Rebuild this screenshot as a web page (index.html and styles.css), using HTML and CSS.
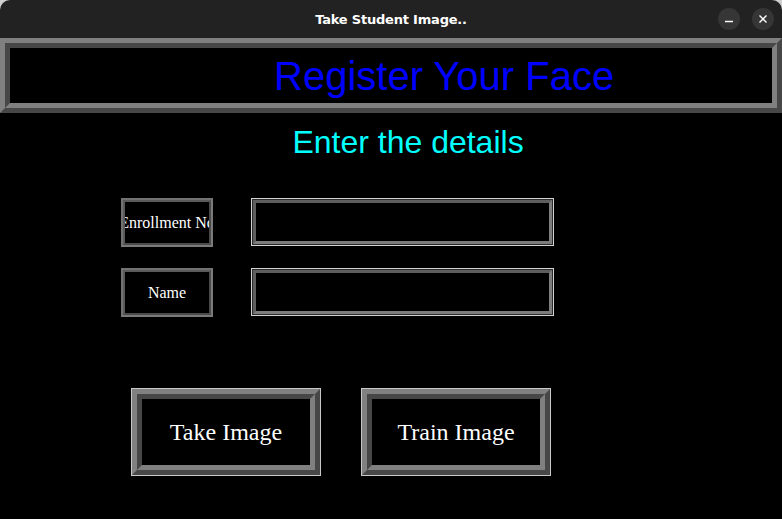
FILE: index.html
```html
<!DOCTYPE html>
<html>
<head>
<meta charset="utf-8">
<link rel="stylesheet" href="styles.css">
</head>
<body>
<div class="window">
  <div class="titlebar">
    <span class="title">Take Student Image..</span>
    <div class="winbtns">
      <span class="winbtn"><svg width="10" height="10" viewBox="0 0 10 10"><path d="M1 7.5 H9" stroke="#fff" stroke-width="1.5"/></svg></span>
      <span class="winbtn"><svg width="10" height="10" viewBox="0 0 10 10"><path d="M1.5 1.5 L8.5 8.5 M8.5 1.5 L1.5 8.5" stroke="#fff" stroke-width="1.4"/></svg></span>
    </div>
  </div>
  <div class="header ridge-out">
    <div class="ridge-in header-inner">
      <span class="header-text">Register Your Face</span>
    </div>
  </div>
  <div class="main">
    <div class="subtitle">Enter the details</div>
    <div class="form">
      <div class="label-box"><div class="label-inner"><span>Enrollment No</span></div></div>
      <div class="entry"><div class="entry-inner"></div></div>
      <div class="label-box"><div class="label-inner"><span>Name</span></div></div>
      <div class="entry"><div class="entry-inner"></div></div>
    </div>
    <div class="actions">
      <div class="btn"><div class="ridge-out btn-mid"><div class="ridge-in btn-inner">Take Image</div></div></div>
      <div class="btn"><div class="ridge-out btn-mid"><div class="ridge-in btn-inner">Train Image</div></div></div>
    </div>
  </div>
</div>
</body>
</html>
```

FILE: styles.css
```css
html, body {
  margin: 0;
  padding: 0;
  background: #cfcfcf;
}
.window {
  width: 782px;
  height: 519px;
  display: flex;
  flex-direction: column;
  overflow: hidden;
}
.titlebar {
  height: 38px;
  flex: 0 0 38px;
  background: #222222;
  border-radius: 10px 10px 0 0;
  display: flex;
  align-items: center;
  justify-content: center;
  position: relative;
}
.title {
  color: #ffffff;
  font-family: "DejaVu Sans", sans-serif;
  font-weight: bold;
  font-size: 13px;
  letter-spacing: -0.2px;
}
.winbtns {
  position: absolute;
  right: 8px;
  top: 8px;
  display: flex;
  gap: 12px;
}
.winbtn {
  width: 22px;
  height: 22px;
  border-radius: 50%;
  background: #363636;
  display: flex;
  align-items: center;
  justify-content: center;
}
.ridge-out {
  border: 5px solid;
  border-color: #808080 #474747 #474747 #808080;
}
.ridge-in {
  border: 5px solid;
  border-color: #474747 #808080 #808080 #474747;
}
.header {
  height: 75px;
  flex: 0 0 75px;
  box-sizing: border-box;
  background: #000;
}
.header-inner {
  height: 100%;
  box-sizing: border-box;
  display: flex;
  align-items: center;
  background: #000;
}
.header-text {
  padding-left: 264px;
  color: #0000ff;
  font-family: "Liberation Sans", Arial, sans-serif;
  font-size: 40px;
  line-height: 46px;
}
.main {
  flex: 1;
  background: #000;
  display: flex;
  flex-direction: column;
}
.subtitle {
  margin-top: 11px;
  height: 36px;
  line-height: 36px;
  padding-left: 34px;
  text-align: center;
  color: #00ffff;
  font-family: "Liberation Sans", Arial, sans-serif;
  font-size: 32px;
}
.form {
  margin-top: 38px;
  padding-left: 121px;
  display: grid;
  grid-template-columns: 92px 303px;
  grid-auto-rows: 49px;
  column-gap: 38px;
  row-gap: 21px;
}
.label-box {
  box-sizing: border-box;
  height: 49px;
  border: 2px solid;
  border-color: #727272 #7a7a7a #7a7a7a #727272;
}
.label-inner {
  box-sizing: border-box;
  height: 100%;
  border: 2px solid;
  border-color: #5a5a5a #4a4a4a #4a4a4a #5a5a5a;
  display: flex;
  align-items: center;
  justify-content: center;
  overflow: hidden;
  white-space: nowrap;
  color: #ffffff;
  font-family: "Liberation Serif", "Times New Roman", serif;
  font-size: 16px;
}
.entry {
  box-sizing: border-box;
  height: 48px;
  border: 1px solid #d2d2d2;
  padding: 1px;
  background: #2a2a2a;
}
.entry-inner {
  box-sizing: border-box;
  height: 100%;
  border: 3px solid;
  border-color: #5e5e5e #7c7c7c #7c7c7c #5e5e5e;
  background: #000;
}
.actions {
  margin-top: 71px;
  padding-left: 131px;
  display: flex;
  gap: 40px;
}
.btn {
  width: 190px;
  height: 88px;
  box-sizing: border-box;
  border: 1px solid #c8c8c8;
}
.btn-mid {
  height: 100%;
  box-sizing: border-box;
}
.btn-inner {
  height: 100%;
  box-sizing: border-box;
  display: flex;
  align-items: center;
  justify-content: center;
  color: #ffffff;
  background: #000;
  font-family: "Liberation Serif", "Times New Roman", serif;
  font-size: 24px;
}
```
